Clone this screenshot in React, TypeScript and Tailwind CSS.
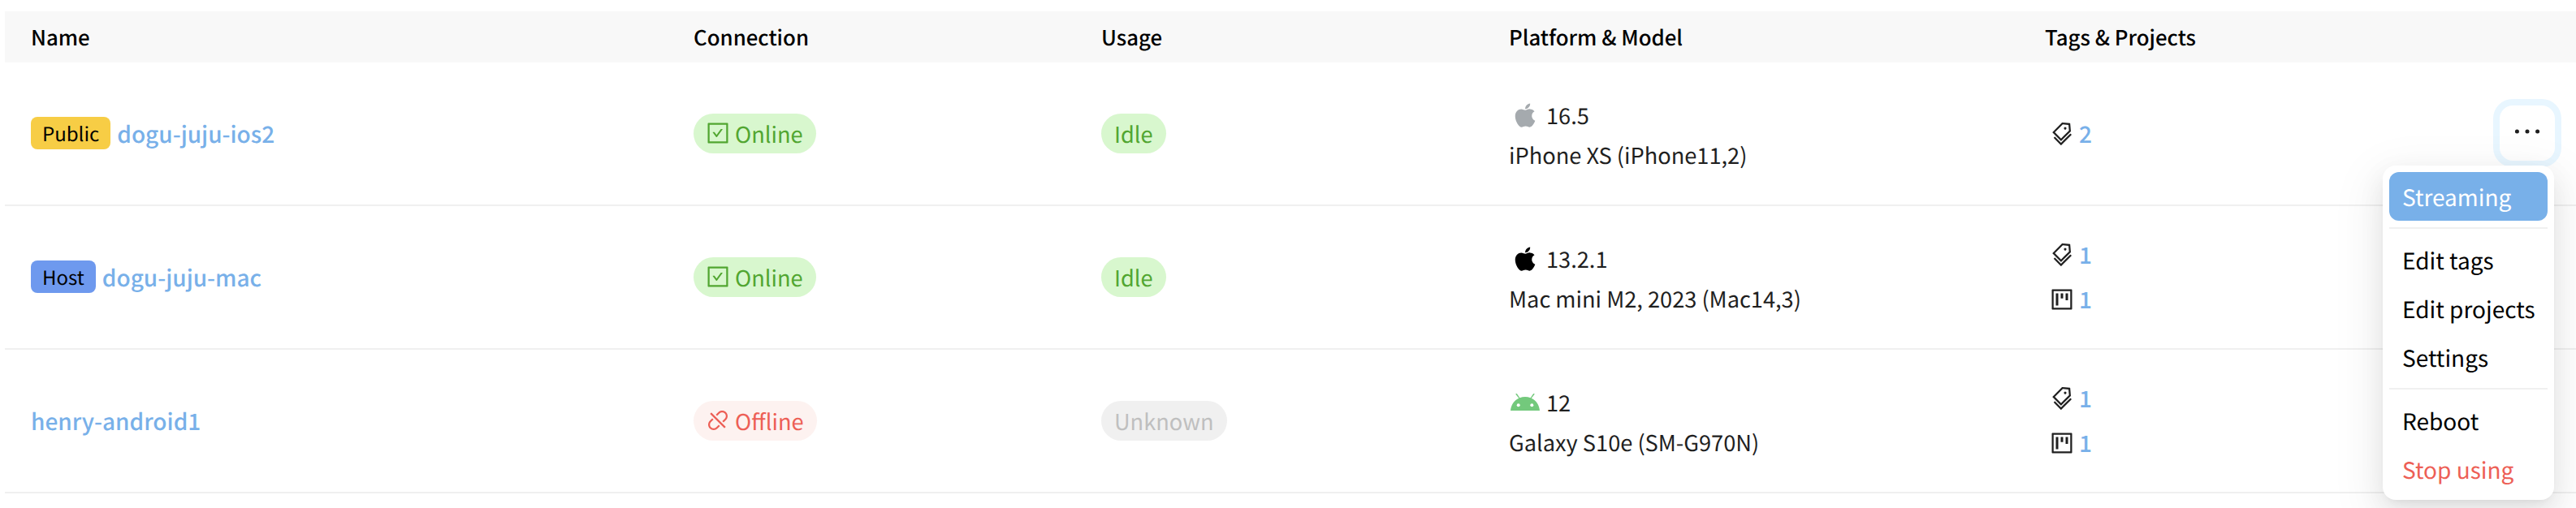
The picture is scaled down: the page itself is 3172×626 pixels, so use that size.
import React from "react";
import {
  AiOutlineCheckSquare,
  AiOutlineDisconnect,
  AiOutlineTags,
  AiOutlineProject,
  AiOutlineEllipsis,
  AiFillApple,
} from "react-icons/ai";

function AndroidIcon() {
  return (
    <svg viewBox="0 0 36 21" className="h-[21px] w-9" fill="#73c97c">
      <path d="M0 21C.9 13 5 8.200 10.300 5.800L6.100.600 7.800 0l3.600 5.200c4-1.500 9.200-1.500 13.200 0L28.200 0l1.700.600-4.200 5.200C31 8.200 35.100 13 36 21Z" />
      <circle cx="9.700" cy="14.300" r="2" fill="#fff" />
      <circle cx="26.300" cy="14.300" r="2" fill="#fff" />
    </svg>
  );
}

type Device = {
  badge?: { label: string; color: string };
  name: string;
  online: boolean;
  usage: string;
  platform: "ios" | "mac" | "android";
  version: string;
  model: string;
  tags: number;
  projects?: number;
};

const devices: Device[] = [
  {
    badge: { label: "Public", color: "bg-[#f7cd45]" },
    name: "dogu-juju-ios2",
    online: true,
    usage: "Idle",
    platform: "ios",
    version: "16.5",
    model: "iPhone XS (iPhone11,2)",
    tags: 2,
  },
  {
    badge: { label: "Host", color: "bg-[#6e99ee]" },
    name: "dogu-juju-mac",
    online: true,
    usage: "Idle",
    platform: "mac",
    version: "13.2.1",
    model: "Mac mini M2, 2023 (Mac14,3)",
    tags: 1,
    projects: 1,
  },
  {
    name: "henry-android1",
    online: false,
    usage: "Unknown",
    platform: "android",
    version: "12",
    model: "Galaxy S10e (SM-G970N)",
    tags: 1,
    projects: 1,
  },
];

const columns = "grid grid-cols-[816px_502px_502px_660px_1fr]";

function Count({ icon, value, className = "" }: { icon: React.ReactNode; value: number; className?: string }) {
  return (
    <div className={`flex gap-[5px] ${className}`}>
      <span className="flex h-[49px] items-center">{icon}</span>
      <span className="h-[49px] text-[28px] leading-[50px] font-medium text-[#78b0e9]">{value}</span>
    </div>
  );
}

function Row({ device }: { device: Device }) {
  return (
    <div className={`${columns} h-[177px] items-center border-b-2 border-[#f0f0f0] pl-8 text-[27.2px] leading-[48px]`}>
      <div className="flex gap-2 pb-px">
        {device.badge && (
          <span className={`h-10 rounded-lg px-[14px] text-[24px] leading-[39px] text-black ${device.badge.color}`}>
            {device.badge.label}
          </span>
        )}
        <span className="h-10 text-[28px] leading-[42px] font-medium text-[#78b0e9]">{device.name}</span>
      </div>
      <div className="flex">
        <span
          className={`flex h-[49px] gap-[5px] rounded-full pr-4 pl-[14px] ${
            device.online ? "bg-[#d8f7ce] text-[#51a631]" : "bg-[#fdf2f0] text-[#ed5f56]"
          }`}
        >
          <span className="flex h-[47px] items-center">
            {device.online ? <AiOutlineCheckSquare className="size-8" /> : <AiOutlineDisconnect className="size-8" />}
          </span>
          {device.online ? "Online" : "Offline"}
        </span>
      </div>
      <div className="flex">
        <span
          className={`h-[49px] rounded-full px-4 ${
            device.usage === "Idle" ? "bg-[#d8f7ce] text-[#51a631]" : "bg-[#f0f0f0] text-[#bfbfbf]"
          }`}
        >
          {device.usage}
        </span>
      </div>
      <div className="flex flex-col pt-[3px]">
        <div className="flex h-[49px] gap-1.5">
          <span className="flex w-10 items-center justify-center">
            {device.platform === "android" ? (
              <AndroidIcon />
            ) : (
              <AiFillApple className={`size-9 ${device.platform === "ios" ? "text-[#a5aaae]" : "text-black"}`} />
            )}
          </span>
          {device.version}
        </div>
        <div className="h-[49px]">{device.model}</div>
      </div>
      <div className="flex flex-col gap-1.5 pl-[5px]">
        <Count icon={<AiOutlineTags className="size-8" />} value={device.tags} className="h-[49px]" />
        {device.projects !== undefined && (
          <Count icon={<AiOutlineProject className="size-8" />} value={device.projects} className="h-[50px]" />
        )}
      </div>
    </div>
  );
}

function MenuItem({ label, className = "text-black" }: { label: string; className?: string }) {
  return <div className={`h-[60px] rounded-xl px-4 leading-[62px] whitespace-nowrap ${className}`}>{label}</div>;
}

export default function App() {
  return (
    <div className="relative h-[626px] overflow-hidden bg-white pt-3.5 pl-1.5 font-['Noto_Sans_CJK_KR',sans-serif] text-[28px] text-[#1f1f1f] [text-rendering:geometricPrecision]">
      <div className={`${columns} h-[63px] bg-[#f8f8f8] pl-8 text-[25.8px] leading-[63px] font-medium text-black`}>
        <span>Name</span>
        <span>Connection</span>
        <span>Usage</span>
        <span>Platform &amp; Model</span>
        <span>Tags &amp; Projects</span>
      </div>
      {devices.map((device) => (
        <Row key={device.name} device={device} />
      ))}
      <button className="absolute top-[130px] left-[3078px] flex size-[68px] items-center justify-center rounded-2xl bg-white pb-1 shadow-[0_0_0_8px_#e8f6ff]">
        <AiOutlineEllipsis className="size-[46px] shrink-0" />
      </button>
      <div className="absolute top-[204px] left-[2934px] w-[211px] rounded-2xl bg-white p-2 shadow-[0_12px_32px_0_rgba(0,0,0,0.08),0_6px_12px_-8px_rgba(0,0,0,0.12),0_18px_56px_16px_rgba(0,0,0,0.05)]">
        <MenuItem label="Streaming" className="bg-[#78b0e9] text-white" />
        <div className="my-2 h-0.5 bg-[#f0f0f0]" />
        <MenuItem label="Edit tags" />
        <MenuItem label="Edit projects" />
        <MenuItem label="Settings" />
        <div className="my-2 h-0.5 bg-[#f0f0f0]" />
        <MenuItem label="Reboot" />
        <MenuItem label="Stop using" className="text-[#ed5f56]" />
      </div>
    </div>
  );
}
